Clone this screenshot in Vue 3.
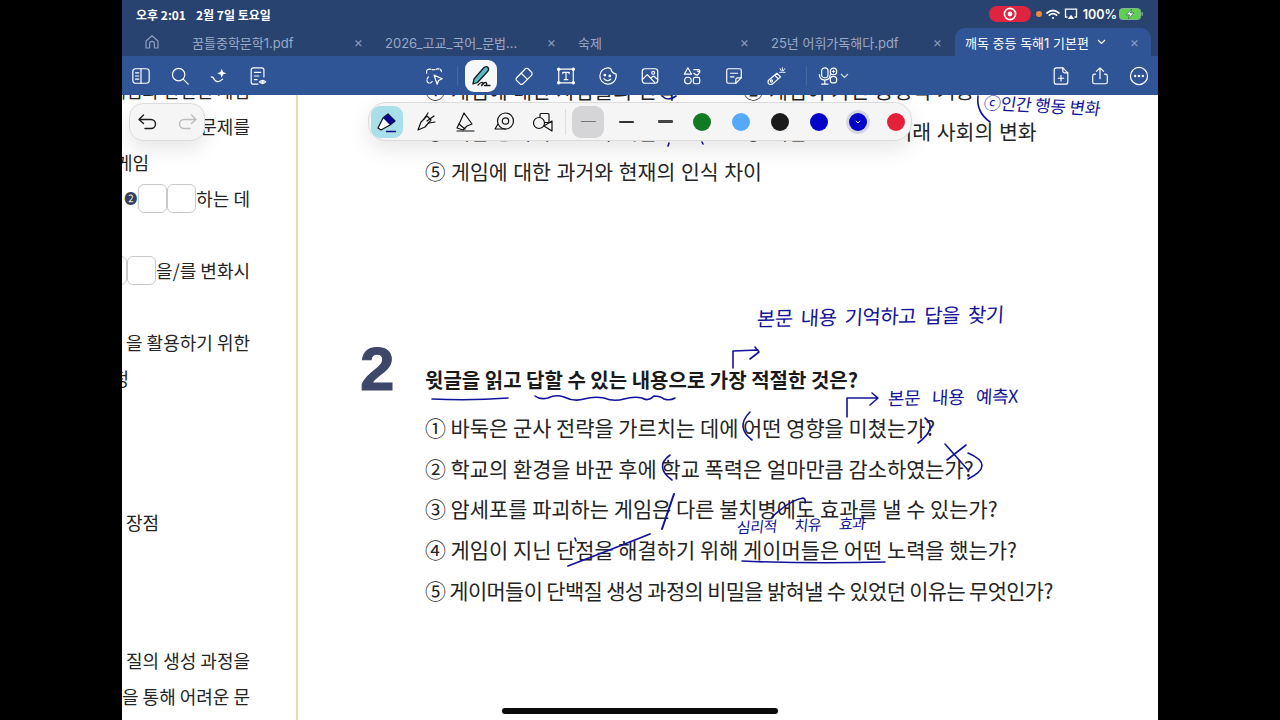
<template>
  <div class="stage">
    <div class="screen">
      <!-- status bar -->
      <div class="status">
        <span class="clock">오후 2:01</span>
        <span class="clock date">2월 7일 토요일</span>
        <div class="status-right">
          <span class="rec"><svg width="14" height="14" viewBox="0 0 14 14"><circle cx="7" cy="7" r="5.6" fill="none" stroke="#fff" stroke-width="1.6"/><circle cx="7" cy="7" r="2.4" fill="#fff"/></svg></span>
          <span class="dot"></span>
          <svg width="14" height="11" viewBox="0 0 14 11" fill="none" stroke="#fff" stroke-linecap="round"><path d="M1 4 Q7 -1 13 4" stroke-width="1.7"/><path d="M3.4 6.2 Q7 3.2 10.6 6.2" stroke-width="1.7"/><circle cx="7" cy="9" r="1" fill="#fff" stroke="none"/></svg>
          <svg width="14" height="12" viewBox="0 0 14 12" fill="none" stroke="#fff" stroke-width="1.3"><path d="M3.5 9 H1.5 V1.2 H12.5 V9 H10.5"/><path d="M7 6.8 L10.2 11 H3.8 Z" fill="#fff" stroke="none"/></svg>
          <span class="pct">100%</span>
          <svg width="24" height="12" viewBox="0 0 24 12"><rect x="0.5" y="0.5" width="21" height="11" rx="3" fill="#5fd04e" stroke="#7fb98a"/><rect x="22.4" y="4" width="1.4" height="4" rx="0.7" fill="#8aa6a0"/><path d="M12.5 1.2 L7 6.8 H10.6 L9.4 10.8 L15 5 H11.4 Z" fill="#fff" stroke="#24406f" stroke-width="0.6"/></svg>
        </div>
      </div>

      <!-- tabs -->
      <div class="tabs">
        <div class="home">
          <svg width="16" height="16" viewBox="0 0 16 16" fill="none" stroke="#8d9dbd" stroke-width="1.2" stroke-linejoin="round"><path d="M2 7 L8 1.8 L14 7 V14 H10.4 V9.8 A2.4 2.4 0 0 0 5.6 9.8 V14 H2 Z"/></svg>
        </div>
        <div v-for="t in tabs" :key="t" class="tab">
          <span class="tab-name">{{ t }}</span>
          <span class="tab-x">×</span>
        </div>
        <div class="tab active">
          <span class="tab-name">깨독 중등 독해1 기본편</span>
          <svg class="tab-chev" width="9" height="6" viewBox="0 0 9 6" fill="none" stroke="#fff" stroke-width="1.2"><path d="M1 1 L4.5 4.5 L8 1"/></svg>
          <span class="tab-x">×</span>
        </div>
      </div>

      <!-- main toolbar -->
      <div class="toolbar">
        <div class="tool-group left">
          <svg class="ti" viewBox="0 0 22 22"><rect x="2" y="3" width="18" height="16" rx="3"/><path d="M11 3 V19 M5 7.5 H8.5 M5 11 H8.5 M5 14.5 H8.5"/></svg>
          <svg class="ti" viewBox="0 0 22 22"><circle cx="9.5" cy="9.5" r="6.8"/><path d="M14.5 14.5 L20 20"/></svg>
          <svg class="ti" viewBox="0 0 22 22"><path d="M2.5 12 Q5 12 5.5 14.5 Q9 20 15 14.5"/><path d="M14 3 L15.4 6.6 L19 8 L15.4 9.4 L14 13 L12.6 9.4 L9 8 L12.6 6.6 Z" fill="#fff" stroke="none"/></svg>
          <svg class="ti" viewBox="0 0 22 22"><path d="M11 20 H6 A2.5 2.5 0 0 1 3.5 17.5 V4.5 A2.5 2.5 0 0 1 6 2 H15 A2.5 2.5 0 0 1 17.5 4.5 V12"/><path d="M7 7 H14 M7 11 H12 M7 15 H10"/><path d="M12.5 17.5 Q16 14 19.5 17.5 Q16 21 12.5 17.5 Z"/><circle cx="16" cy="17.5" r="0.8" fill="#fff"/></svg>
        </div>
        <div class="tool-group mid">
          <svg class="ti" viewBox="0 0 22 22"><path d="M3 8 Q2 3 7 3.5 Q11 5 15 3 Q20 3 19 8 M5 12 Q2 15 4 18 Q7 20 9 17" stroke-dasharray="3 1.6"/><path d="M11 10 L20 14 L16 16 L14.5 20 Z" stroke-linejoin="round"/></svg>
          <span class="v-sep"></span>
          <span class="pen-on">
            <svg width="24" height="24" viewBox="0 0 24 24" fill="none" stroke="#1a1a1a" stroke-width="1.3" stroke-linejoin="round" stroke-linecap="round"><path d="M5 15 L15 3.5 Q17.5 1.8 19 3.5 Q20.5 5.5 18.5 7.5 L8.5 18.5 L4 20 Z" fill="#56bcc7"/><path d="M9 21 Q13 17 14 19 Q14.5 21 12.5 21.5 M13 20.5 Q16 17.5 17.5 19 Q18.5 21.5 15.5 21.5 H21"/></svg>
          </span>
          <svg class="ti" viewBox="0 0 22 22"><path d="M2.5 13.5 L12.5 3 Q14 2 15.5 3 L19.5 7 Q20.5 8.5 19.5 10 L9.5 20 Q8 20.5 7 20 L2.5 15.5 Q2 14.5 2.5 13.5 Z"/><path d="M8 8 L14.5 14.5"/></svg>
          <svg class="ti" viewBox="0 0 22 22"><rect x="3" y="3.5" width="16" height="15"/><circle cx="3" cy="3.5" r="1.3" fill="#fff"/><circle cx="19" cy="3.5" r="1.3" fill="#fff"/><circle cx="3" cy="18.5" r="1.3" fill="#fff"/><circle cx="19" cy="18.5" r="1.3" fill="#fff"/><path d="M7.5 8.5 V7 H14.5 V8.5 M11 7 V15 M9 15 H13"/></svg>
          <svg class="ti" viewBox="0 0 22 22"><path d="M20 12 A9 9 0 1 1 11 2 Q13 2 14 3 Q15 8 20 9 Q20 10 20 12 Z"/><circle cx="7.5" cy="10" r="0.9" fill="#fff"/><circle cx="13" cy="11" r="0.9" fill="#fff"/><path d="M6.5 14 Q10 18 14 14.5"/></svg>
          <svg class="ti" viewBox="0 0 22 22"><rect x="2.5" y="3" width="17" height="16" rx="3"/><circle cx="14.5" cy="7.5" r="1.6"/><path d="M2.5 15 L8 9.5 L16 18 M12 13 L15 11 L19.5 15"/></svg>
          <svg class="ti" viewBox="0 0 22 22"><path d="M6.5 2 L10.5 9 H2.5 Z"/><rect x="12.5" y="12.5" width="7" height="7" rx="2"/><circle cx="6.5" cy="16" r="3.6"/><path d="M13 4 H18 Q20 4 19.5 7 M13 8 Q15 10 17 10 L19.5 7 L17 5.5"/></svg>
          <svg class="ti" viewBox="0 0 22 22"><path d="M3 5 A2 2 0 0 1 5 3 H17 A2 2 0 0 1 19 5 V13 L13 19 H5 A2 2 0 0 1 3 17 Z"/><path d="M7 8 H15 M7 12 H11 M13 19 V15 A2 2 0 0 1 15 13 H19"/></svg>
          <svg class="ti" viewBox="0 0 22 22"><path d="M2.5 16 L12 8 L16 12 L7 20 Q4 21 2.5 19 Q2 17.5 2.5 16 Z"/><circle cx="6" cy="16.5" r="1.2"/><path d="M10 10.5 L13.5 14"/><path d="M18 2 V5 M15.5 3 L17 5.5 M20.5 3 L19 5.5 M15 7 H17.5 M21 7 H18.5" stroke-width="1"/></svg>
          <span class="v-sep wide"></span>
          <span class="mic">
            <svg class="ti" viewBox="0 0 22 22"><rect x="4" y="2" width="7" height="11" rx="3.5"/><path d="M1.5 9.5 Q2 15.5 7.5 15.5 Q13 15.5 13.5 9.5 M7.5 15.5 V20 M4 20 H11"/><circle cx="17" cy="6" r="3.6"/><circle cx="17" cy="15" r="3.6"/><path d="M17 4.5 V7.5 M15.5 6 H18.5" stroke-width="1"/></svg>
            <svg width="9" height="6" viewBox="0 0 9 6" fill="none" stroke="#d5dded" stroke-width="1.1"><path d="M1 1 L4.5 4.5 L8 1"/></svg>
          </span>
        </div>
        <div class="tool-group right">
          <svg class="ti" viewBox="0 0 22 22"><path d="M13 2 H6 A2.5 2.5 0 0 0 3.5 4.5 V17.5 A2.5 2.5 0 0 0 6 20 H16 A2.5 2.5 0 0 0 18.5 17.5 V7.5 Z"/><path d="M13 2 V5.5 A2 2 0 0 0 15 7.5 H18.5 M11 10.5 V16.5 M8 13.5 H14"/></svg>
          <svg class="ti" viewBox="0 0 22 22"><path d="M11 14 V2.5 M7 6 L11 2 L15 6"/><path d="M6 9 H5 A2 2 0 0 0 3 11 V17.5 A2 2 0 0 0 5 19.5 H17 A2 2 0 0 0 19 17.5 V11 A2 2 0 0 0 17 9 H16"/></svg>
          <svg class="ti" viewBox="0 0 22 22"><circle cx="11" cy="11" r="9.4"/><circle cx="6.8" cy="11" r="1.3" fill="#fff" stroke="none"/><circle cx="11" cy="11" r="1.3" fill="#fff" stroke="none"/><circle cx="15.2" cy="11" r="1.3" fill="#fff" stroke="none"/></svg>
        </div>
      </div>

      <!-- document -->
      <div class="doc">
        <div class="side">
          <div class="line end cut">된 게임과 관련된 게임</div>
          <div class="line end">새로운 문제를</div>
          <div class="line shift-a">게임</div>
          <div class="line end"><span class="bullet">❷</span><span class="box"></span><span class="box"></span>하는 데</div>
          <div class="line"></div>
          <div class="line end"><span class="box"></span><span class="box"></span>을/를 변화시</div>
          <div class="line"></div>
          <div class="line end">을 활용하기 위한</div>
          <div class="line shift-b">과정</div>
          <div class="line"></div>
          <div class="line"></div>
          <div class="line"></div>
          <div class="line shift-c">장점</div>
          <div class="side-end">
            <div class="line end">질의 생성 과정을</div>
            <div class="line end">을 통해 어려운 문</div>
          </div>
        </div>

        <div class="page">
          <div class="q1">
            <div class="opt-row">
              <span class="opt">① 게임에 대한 사람들의 인식</span>
              <span class="opt">② 게임이 가진 긍정적 기능</span>
            </div>
            <div class="opt-row">
              <span class="opt">③ 게임 중독의 원인과 해결</span>
              <span class="opt">④ 게임으로 인한 미래 사회의 변화</span>
            </div>
            <div class="opt">⑤ 게임에 대한 과거와 현재의 인식 차이</div>
          </div>

          <div class="q2">
            <div class="num">2</div>
            <div class="q2-body">
              <div class="title">윗글을 읽고 답할 수 있는 내용으로 가장 적절한 것은?</div>
              <div v-for="o in options" :key="o" class="opt">{{ o }}</div>
            </div>
          </div>
        </div>

        <!-- pen annotations, viewBox uses screen coordinates -->
        <svg class="ink" viewBox="122 95 1036 625" fill="none" stroke="#13139a" stroke-width="1.6" stroke-linecap="round" stroke-linejoin="round">
          <path d="M432 399 Q470 401 508 398"/>
          <path d="M535 396 Q540 400 548 398 Q556 394 564 397 Q574 402 584 399 Q594 396 604 398 Q614 402 624 399 Q634 396 642 398 Q648 402 654 396 Q660 396 664 399 Q670 401 675 398"/>
          <path d="M750 412 Q735 427 752 440"/>
          <path d="M925 418 Q938 428 918 443"/>
          <path d="M847 417 L847 398 L877 398 M872 393 L878 398 L870 405"/>
          <path d="M733 368 L733 351 L758 350 M755 347 L759 352 L750 359"/>
          <path d="M670 455 Q654 467 672 480"/>
          <path d="M968 453 Q996 465 968 479"/>
          <path d="M945 444 L968 470 M966 445 L947 460"/>
          <path d="M674 494 L662 529" stroke-width="2"/>
          <path d="M568 566 Q610 550 650 534" stroke-width="1.8"/>
          <path d="M575 538 L576 541"/>
          <path d="M772 517 Q790 500 803 498 Q806 499 805 503"/>
          <path d="M742 561 Q810 564 885 562"/>
          <path d="M978 96 Q976 112 990 122"/>
          <path d="M662 96 Q668 102 676 96"/>
          <path d="M669 143 L668 146 M702 142 L703 144"/>
        </svg>
        <span class="hand h1">본문 내용 기억하고 답을 찾기</span>
        <span class="hand h2">본문 내용 예측X</span>
        <span class="hand h3">심리적 치유 효과</span>
        <span class="hand h4">ⓒ인간 행동 변화</span>

        <!-- floating undo / redo -->
        <div class="undo">
          <svg width="22" height="18" viewBox="0 0 22 18" fill="none" stroke="#1c1c1c" stroke-width="1.4" stroke-linecap="round" stroke-linejoin="round"><path d="M6.5 2 L2 6.5 L6.5 10.5 M2 6.5 H14 A4.5 4.5 0 0 1 14 15.5 H8"/></svg>
          <svg width="22" height="18" viewBox="0 0 22 18" fill="none" stroke="#bcbcbc" stroke-width="1.4" stroke-linecap="round" stroke-linejoin="round"><path d="M15.5 2 L20 6.5 L15.5 10.5 M20 6.5 H8 A4.5 4.5 0 0 0 8 15.5 H14"/></svg>
        </div>

        <!-- floating pen bar -->
        <div class="penbar">
          <span class="pen-cell selected">
            <svg width="24" height="24" viewBox="0 0 24 24" fill="none" stroke="#111" stroke-width="1.2" stroke-linejoin="round"><path d="M3 18 L8 8 L13 4 L20 11 L15 15 L6 20 Z" fill="#fff"/><path d="M13 4 L20 11 L15 15 L8 8 Z" fill="#0a0a8c" stroke="none"/><path d="M11 21.5 H21" stroke="#0a0a8c" stroke-width="1.5"/></svg>
          </span>
          <span class="pen-cell">
            <svg width="24" height="24" viewBox="0 0 24 24" fill="none" stroke="#111" stroke-width="1.2" stroke-linejoin="round" stroke-linecap="round"><path d="M4 20 L7 12 L13 6 L17 10 L11 17 Z M4 20 L11 17"/><path d="M10 9 L14 3 M13 11 L20 6 M15 13 L21 12"/></svg>
          </span>
          <span class="pen-cell">
            <svg width="24" height="24" viewBox="0 0 24 24" fill="none" stroke="#111" stroke-width="1.2" stroke-linejoin="round" stroke-linecap="round"><path d="M11 3 L7 12 L4 18 L10 20 L14 16 L19 14 Z"/><path d="M6 14 L12 19 M4 21 H21"/></svg>
          </span>
          <span class="pen-cell">
            <svg width="24" height="24" viewBox="0 0 24 24" fill="none" stroke="#111" stroke-width="1.2" stroke-linejoin="round"><circle cx="13.5" cy="11" r="8"/><circle cx="13.5" cy="11" r="3.2"/><path d="M6 14 L3 19 H14"/></svg>
          </span>
          <span class="pen-cell">
            <svg width="24" height="24" viewBox="0 0 24 24" fill="none" stroke="#111" stroke-width="1.2" stroke-linejoin="round"><rect x="9" y="3.5" width="9" height="9" rx="1"/><circle cx="8" cy="13" r="5.5" fill="#f5f5f5"/><path d="M21 11 V21 L13 16 Z" fill="#f5f5f5"/></svg>
          </span>
          <span class="bar-sep"></span>
          <span class="thick on"><i class="t1"></i></span>
          <span class="thick"><i class="t2"></i></span>
          <span class="thick"><i class="t3"></i></span>
          <div class="swatches">
            <span v-for="c in colors" :key="c.hex + c.on" class="swatch" :class="{ ring: c.on }">
              <span class="chip" :style="{ background: c.hex }">
                <svg v-if="c.on" width="6" height="4" viewBox="0 0 6 4" fill="none" stroke="#fff" stroke-width="0.9"><path d="M0.8 0.8 L3 3 L5.2 0.8"/></svg>
              </span>
            </span>
          </div>
        </div>

        <div class="home-bar"></div>
      </div>
    </div>
  </div>
</template>

<script setup>
const tabs = ['꿈틀중학문학1.pdf', '2026_고교_국어_문법...', '숙제', '25년 어휘가독해다.pdf']

const options = [
  '① 바둑은 군사 전략을 가르치는 데에 어떤 영향을 미쳤는가?',
  '② 학교의 환경을 바꾼 후에 학교 폭력은 얼마만큼 감소하였는가?',
  '③ 암세포를 파괴하는 게임은 다른 불치병에도 효과를 낼 수 있는가?',
  '④ 게임이 지닌 단점을 해결하기 위해 게이머들은 어떤 노력을 했는가?',
  '⑤ 게이머들이 단백질 생성 과정의 비밀을 밝혀낼 수 있었던 이유는 무엇인가?'
]

const colors = [
  { hex: '#127a22' },
  { hex: '#55a9f8' },
  { hex: '#1b1b1b' },
  { hex: '#0404c8' },
  { hex: '#0404c8', on: true },
  { hex: '#e4203a' }
]
</script>

<style>
html, body {
  margin: 0;
  background: #000;
}
</style>

<style scoped>
.stage {
  display: flex;
  justify-content: center;
  width: 1280px;
  height: 720px;
  background: #000;
  overflow: hidden;
  font-family: "Noto Sans CJK KR", "Noto Sans", sans-serif;
}

.screen {
  width: 1036px;
  height: 720px;
  display: flex;
  flex-direction: column;
  background: #fff;
}

.status {
  height: 28px;
  background: #294371;
  display: flex;
  align-items: center;
  padding: 0 15px 0 14px;
  color: #fff;
  font-size: 12px;
  font-weight: 500;
}

.clock {
  font-weight: 700;
  font-size: 12px;
}

.date {
  margin-left: 10px;
}

.status-right {
  margin-left: auto;
  display: flex;
  align-items: center;
  gap: 4px;
}

.rec {
  width: 42px;
  height: 16px;
  border-radius: 8px;
  background: #df2440;
  display: flex;
  align-items: center;
  justify-content: center;
  margin-right: 1px;
}

.dot {
  width: 6px;
  height: 6px;
  border-radius: 50%;
  background: #f0883a;
}

.pct {
  font-family: "Inter", sans-serif;
  font-size: 12.5px;
  font-weight: 600;
  margin: 0 -2px 0 1px;
}

.tabs {
  height: 28px;
  background: #294371;
  display: flex;
  align-items: stretch;
  font-family: "Inter", "Noto Sans CJK KR", sans-serif;
  font-size: 13px;
  color: #9aa9c6;
}

.home {
  width: 50px;
  padding-left: 22px;
  box-sizing: border-box;
  display: flex;
  align-items: center;
}

.tab {
  width: 193px;
  box-sizing: border-box;
  display: flex;
  align-items: center;
  padding: 0 2px 0 20px;
  white-space: nowrap;
}

.tab-x {
  margin-left: auto;
  font-size: 14px;
  color: #8d9dbd;
  line-height: 1;
}

.tab.active {
  width: 196px;
  margin-left: 11px;
  padding: 0 12px 0 10px;
  background: #2f5596;
  border-radius: 10px 10px 0 0;
  color: #fff;
}

.tab-chev {
  margin-left: 8px;
}

.toolbar {
  height: 39px;
  background: #2f5596;
  display: flex;
  align-items: center;
  padding: 0 9px;
}

.tool-group {
  display: flex;
  align-items: center;
}

.ti {
  width: 20px;
  height: 20px;
  fill: none;
  stroke: #fff;
  stroke-width: 1.3;
  stroke-linecap: round;
  stroke-linejoin: round;
  flex: none;
}

.left {
  gap: 19px;
}

.mid {
  gap: 22px;
  margin-left: 156px;
}

.right {
  gap: 19px;
  margin-left: auto;
}

.v-sep {
  width: 1px;
  height: 20px;
  background: #46699f;
  margin: 0 -9px;
}

.v-sep.wide {
  margin: 0 -2px;
}

.pen-on {
  width: 32px;
  height: 32px;
  margin: 0 -5px 0 -6px;
  border-radius: 9px;
  background: #f6f7f9;
  display: flex;
  align-items: center;
  justify-content: center;
}

.mic {
  display: flex;
  align-items: center;
  gap: 2px;
  margin-left: -9px;
}

.doc {
  position: relative;
  flex: 1;
  display: flex;
  overflow: hidden;
  color: #242424;
}

.side {
  width: 176px;
  flex: none;
  box-sizing: border-box;
  border-right: 2px solid #e6dfa8;
  padding-right: 46px;
  margin-top: -23px;
  font-size: 18px;
  overflow: hidden;
}

.line {
  height: 36px;
  line-height: 36px;
  white-space: nowrap;
  display: flex;
  align-items: center;
}

.end {
  justify-content: flex-end;
}

.shift-a {
  margin-left: -6px;
}

.shift-b {
  margin-left: -26px;
}

.shift-c {
  margin-left: 4px;
}

.side-end {
  margin-top: 102px;
}

.bullet {
  font-size: 13px;
  color: #34405e;
  margin-right: 1px;
}

.box {
  width: 29px;
  height: 29px;
  border: 1px solid #c9c9c9;
  border-radius: 6px;
  flex: none;
  box-sizing: border-box;
  background: #fff;
}

.page {
  flex: 1;
  padding-left: 62px;
  margin-top: -25px;
}

.q1 {
  padding-left: 65px;
}

.q1 .opt {
  font-size: 20.5px;
  word-spacing: 1px;
}

.opt-row {
  display: grid;
  grid-template-columns: 318px 1fr;
}

.opt {
  height: 40.6px;
  line-height: 40.6px;
  font-size: 20.9px;
  white-space: nowrap;
}

.q2-body .opt:last-child {
  letter-spacing: -0.63px;
}

.q2 {
  display: flex;
  margin-top: 146px;
}

.num {
  width: 65px;
  flex: none;
  height: 62px;
  line-height: 62px;
  font-family: "Liberation Sans", sans-serif;
  font-size: 62px;
  font-weight: 700;
  color: #3d4769;
  -webkit-text-stroke: 1px #3d4769;
}

.q2-body {
  padding-top: 22px;
}

.title {
  height: 40px;
  line-height: 40px;
  margin-bottom: 7.5px;
  font-size: 20px;
  font-weight: 700;
  color: #1a1a1a;
  white-space: nowrap;
}

.ink {
  position: absolute;
  left: 0;
  top: 0;
  width: 1036px;
  height: 625px;
  pointer-events: none;
}

.hand {
  position: absolute;
  color: #13139a;
  white-space: nowrap;
  line-height: 1;
}

.h1 {
  left: 635px;
  top: 211px;
  font-size: 20px;
  word-spacing: 4px;
  letter-spacing: -0.5px;
  transform: rotate(-1deg) skewX(-4deg);
}

.h2 {
  left: 766px;
  top: 292px;
  font-size: 18px;
  word-spacing: 8px;
  letter-spacing: -0.4px;
  transform: rotate(-1deg) skewX(-4deg);
}

.h3 {
  left: 615px;
  top: 422px;
  font-size: 15px;
  word-spacing: 15px;
  letter-spacing: -0.5px;
  transform: rotate(-2deg) skewX(-8deg);
}

.h4 {
  left: 862px;
  top: 1px;
  font-size: 17px;
  letter-spacing: -0.2px;
  transform: rotate(3deg) skewX(-6deg);
}

.undo {
  position: absolute;
  left: 7px;
  top: 8px;
  width: 76px;
  height: 38px;
  box-sizing: border-box;
  border: 1px solid #dcdcdc;
  border-radius: 14px;
  background: #f5f5f5;
  box-shadow: 0 8px 20px rgba(0, 0, 0, 0.1);
  display: flex;
  align-items: center;
  justify-content: center;
  gap: 17px;
}

.penbar {
  position: absolute;
  left: 246px;
  top: 7px;
  width: 544px;
  height: 39px;
  box-sizing: border-box;
  border: 1px solid #dcdcdc;
  border-radius: 18px;
  background: #f5f5f5;
  box-shadow: 0 8px 22px rgba(0, 0, 0, 0.1);
  display: flex;
  align-items: center;
  padding: 0 2px;
}

.pen-cell {
  width: 39px;
  height: 32px;
  flex: none;
  display: flex;
  align-items: center;
  justify-content: center;
}

.pen-cell.selected {
  width: 32px;
  margin-right: 3px;
  border-radius: 9px;
  background: #a8dfe8;
}

.bar-sep {
  width: 1px;
  height: 26px;
  background: #dedede;
  margin: 0 6px 0 3px;
  flex: none;
}

.thick {
  width: 39px;
  height: 32px;
  flex: none;
  display: flex;
  align-items: center;
  justify-content: center;
}

.thick.on {
  width: 32px;
  margin-right: 3px;
  border-radius: 9px;
  background: #d5d5d7;
}

.t1,
.t2,
.t3 {
  display: block;
  width: 15px;
  border-radius: 1px;
}

.t1 {
  height: 1px;
  background: #777;
}

.t2 {
  height: 2px;
  background: #333;
}

.t3 {
  height: 3px;
  background: #444;
}

.swatches {
  display: flex;
  margin-left: -2px;
}

.swatch {
  width: 38.8px;
  height: 37px;
  flex: none;
  display: flex;
  align-items: center;
  justify-content: center;
}

.swatch.ring .chip {
  box-shadow: 0 0 0 3px #d5d8df;
}

.chip {
  width: 18px;
  height: 18px;
  border-radius: 50%;
  display: flex;
  align-items: center;
  justify-content: center;
}

.home-bar {
  position: absolute;
  left: 380px;
  bottom: 6px;
  width: 276px;
  height: 6px;
  border-radius: 3px;
  background: #0a0a0a;
}
</style>
